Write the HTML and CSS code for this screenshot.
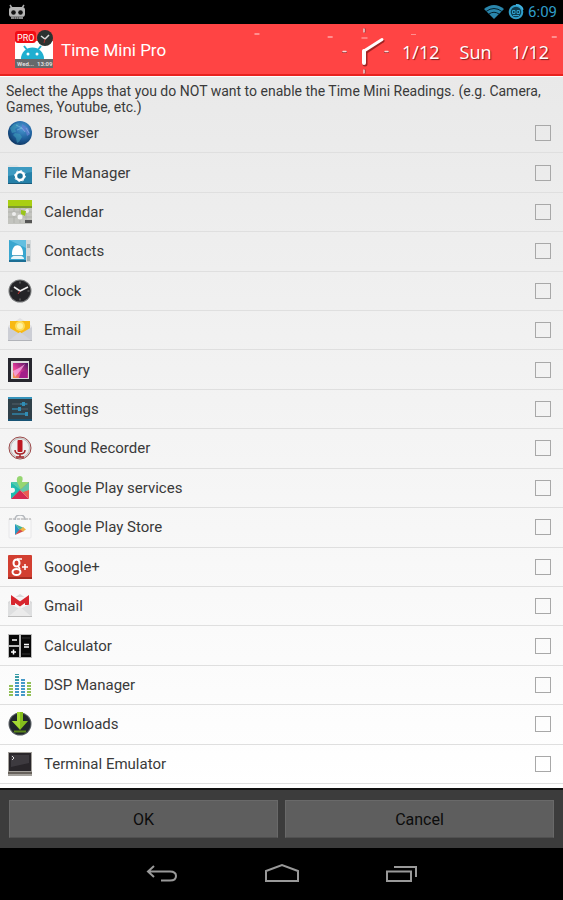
FILE: index.html
```html
<!DOCTYPE html>
<html lang="en">
<head>
  <meta charset="UTF-8">
  <meta name="viewport" content="width=device-width, initial-scale=1.0">
  <title>Time Mini Pro</title>
  <link rel="stylesheet" href="styles.css">
</head>
<body>

  <div class="statusbar">
    <svg class="robot" width="18" height="16" viewBox="0 0 18 16">
      <path d="M2 1l2 3M16 1l-2 3" stroke="#aaa" stroke-width="1.5"/>
      <rect x="1" y="3" width="16" height="10" rx="3" fill="#b5b5b5"/>
      <path d="M3 12h12v3H3z" fill="#888"/>
      <circle cx="5.5" cy="8.5" r="2.3" fill="#111"/>
      <circle cx="12.5" cy="8.5" r="2.3" fill="#111"/>
      <path d="M6 14h6" stroke="#333" stroke-dasharray="1 1"/>
    </svg>
    <div class="status-right">
      <svg width="20" height="16" viewBox="0 0 20 16" fill="#2a86ac">
        <path d="M0 5Q10-3 20 5L10 15z"/>
        <path d="M2 7.500Q10 1.500 18 7.500M5 10Q10 6.500 15 10" fill="none" stroke="#04202c"/>
      </svg>
      <svg width="16" height="16" viewBox="0 0 16 16">
        <circle cx="8" cy="8" r="6.300" fill="#0d3c50" stroke="#2f9dc9" stroke-width="2"/>
        <path d="M8 .7a7.300 7.300 0 0 1 7 5" fill="none" stroke="#46b8e6" stroke-width="1.400"/>
        <path d="M4.500 6.500h2.500v3H4.500zM9 6.500h2.500v3H9z" fill="none" stroke="#2f9dc9"/>
        <path d="M5 11.500h6" stroke="#2f9dc9"/>
      </svg>
      <span>6:09</span>
    </div>
  </div>

  <header class="topbar">
    <svg class="app-logo" width="40" height="40" viewBox="0 0 40 40">
      <rect x="1" y="11" width="38" height="18" fill="#fff"/>
      <path d="M7 29a11 11 0 0 1 23 0z" fill="#20afd0"/>
      <path d="M10 16l4 5M27 16l-4 5" stroke="#20afd0" stroke-width="2"/>
      <circle cx="14" cy="24" r="1.500" fill="#fff"/>
      <circle cx="23" cy="24" r="1.500" fill="#fff"/>
      <rect x="1" y="29" width="38" height="9" fill="#66696b"/>
      <text x="3" y="36" font-size="6" font-weight="700" fill="#ddd">Wed...</text>
      <text x="23" y="36" font-size="6" font-weight="700" fill="#ddd">13:09</text>
      <rect x="1" y="1" width="21" height="12" rx="3" fill="#f20d14"/>
      <text x="3" y="11" font-size="9" fill="#fff">PRO</text>
      <circle cx="31" cy="8" r="8" fill="#2b3230"/>
      <path d="M27 6l4 3 4-4" fill="none" stroke="#ddd" stroke-width="1.500"/>
      <path d="M31 9l-1 4" stroke="#a33"/>
    </svg>
    <h1>Time Mini Pro</h1>
    <svg class="specks" width="100%" height="100%">
      <g fill="#ff8f8f">
        <rect x="45.200%" y="9" width="5" height="2"/>
        <rect x="58.200%" y="12" width="5" height="2"/>
        <rect x="73%" y="10" width="5" height="1"/>
        <rect x="98%" y="12" width="5" height="2"/>
      </g>
    </svg>
    <div class="readings">
      <svg width="52" height="50" viewBox="0 0 52 50" stroke-linecap="round">
        <path d="M26.500 4v3M26.500 45v3M5 27h3M47 27h3" stroke="#903030" stroke-width="2"/>
        <path d="M26 4v3M26 45v3M5 26.500h3M47 26.500h3" stroke="#ffd5d5" stroke-width="1.500"/>
        <path d="M24 13h5" stroke="#ff9090" stroke-width="1.500"/>
        <path d="M27 28L45 16" stroke="#a02424" stroke-width="3"/>
        <path d="M27 27v12" stroke="#a02424" stroke-width="5"/>
        <path d="M26 26L44 14.500" stroke="#fff" stroke-width="3"/>
        <path d="M26 26v12" stroke="#fff" stroke-width="4"/>
      </svg>
      <span>1/12</span>
      <span>Sun</span>
      <span>1/12</span>
    </div>
  </header>

  <main>
    <p class="intro">Select the Apps that you do NOT want to enable the Time Mini Readings. (e.g. Camera, Games, Youtube, etc.)</p>

    <ul class="apps">
      <li>
        <label for="browser">
          <svg viewBox="0 0 24 24">
            <defs>
              <radialGradient id="globe" cx="60%" cy="30%" r="75%">
                <stop offset="0" stop-color="#4b9bd4"/>
                <stop offset=".6" stop-color="#1f5f9c"/>
                <stop offset="1" stop-color="#0e3560"/>
              </radialGradient>
            </defs>
            <circle cx="12" cy="12" r="12" fill="url(#globe)"/>
            <path d="M2 7l4-4 5-1-1 4-3 2 1 3-4 1zM7 12l5 1 2 3-3 5-2 1-1-5-3-3z" fill="#43a7bd" opacity=".5"/>
            <path d="M14 3l6 4 2 6-3 2-1-4-4-2z" fill="#6280cf" opacity=".8"/>
            <path d="M9 9l5-2 3 4M8 4l6 3M18 7l3 5" fill="none" stroke="#a7d6f2" stroke-width=".7" opacity=".6"/>
          </svg>
          Browser
        </label>
        <input type="checkbox" id="browser">
      </li>
      <li>
        <label for="files">
          <svg viewBox="0 0 24 24">
            <path d="M0 4h9l2 2h13v17H0z" fill="#e0e4e5"/>
            <path d="M0 6h24v17H0z" fill="#2580a8"/>
            <path d="M0 6h24v5L0 15z" fill="#3d9ac1"/>
            <path d="M0 22h24v1H0z" fill="#195b7c"/>
            <circle cx="12" cy="15" r="4" fill="#1c7298" stroke="#fff" stroke-width="2.500"/>
            <circle cx="12" cy="15" r="5.500" fill="none" stroke="#fff" stroke-dasharray="1.500 2.800"/>
          </svg>
          File Manager
        </label>
        <input type="checkbox" id="files">
      </li>
      <li>
        <label for="calendar">
          <svg viewBox="0 0 24 24">
            <rect width="24" height="24" fill="#c3c4bf"/>
            <rect width="24" height="6" fill="#a9cf12"/>
            <path d="M0 6h24v2H0z" fill="#7d9b2d"/>
            <path d="M0 12h24M0 17h24M6 8v15M12 8v15M18 8v15" stroke="#b1b2ad"/>
            <circle cx="6" cy="14" r="2" fill="#eee"/>
            <circle cx="12" cy="17" r="2.500" fill="#f4f4f4"/>
            <circle cx="19" cy="11" r="2" fill="#eee"/>
            <path d="M13 10l5 1-1 5-4-2z" fill="#9ac51b"/>
            <path d="M17 20h7v3h-7z" fill="#555"/>
          </svg>
          Calendar
        </label>
        <input type="checkbox" id="calendar">
      </li>
      <li>
        <label for="contacts">
          <svg viewBox="0 0 24 24">
            <rect x="15" y="1" width="8" height="22" fill="#d5d9db"/>
            <path d="M19 5h3v4h-3zM19 17h3v5h-3z" fill="#a5b1b5"/>
            <rect x="1" y="1" width="17" height="22" fill="#39a6cf"/>
            <rect x="1" y="21" width="17" height="2" fill="#1d6e94"/>
            <path d="M1 1h17v8z" fill="#64bfe0"/>
            <path d="M4 16c-1-13 12-13 11 0z" fill="#fff"/>
            <path d="M3 20c0-5 13-5 13 0z" fill="#eaf5f9"/>
            <path d="M5 16.500h9" stroke="#63a9c4"/>
          </svg>
          Contacts
        </label>
        <input type="checkbox" id="contacts">
      </li>
      <li>
        <label for="clock">
          <svg viewBox="0 0 24 24">
            <circle cx="12" cy="12" r="11.500" fill="#77797a"/>
            <circle cx="12" cy="12" r="10.500" fill="#242427"/>
            <path d="M12 2.500v2M12 19.500v2M2.500 12h2M19.500 12h2" stroke="#777"/>
            <path d="M6 8l6 4 8-4" fill="none" stroke="#eee" stroke-width="1.600"/>
            <path d="M12 12l-2 3" stroke="#c33"/>
          </svg>
          Clock
        </label>
        <input type="checkbox" id="clock">
      </li>
      <li>
        <label for="email">
          <svg viewBox="0 0 24 24">
            <path d="M0 8L12 0l12 8v15H0z" fill="#e2e2e5"/>
            <path d="M2 3h20v13H2z" fill="#f8b914"/>
            <circle cx="12" cy="8" r="5" fill="#fddc5a"/>
            <circle cx="12" cy="8" r="3" fill="#fff1a0"/>
            <path d="M0 9l12 7 12-7v14H0z" fill="#ccced5"/>
            <path d="M0 23l12-9 12 9z" fill="#d4d5dc"/>
            <path d="M0 22h24v1H0z" fill="#b2b4ba"/>
          </svg>
          Email
        </label>
        <input type="checkbox" id="email">
      </li>
      <li>
        <label for="gallery">
          <svg viewBox="0 0 24 24">
            <defs>
              <linearGradient id="photo" x1="0" y1="1" x2="1" y2="0">
                <stop offset="0" stop-color="#f8a33a"/>
                <stop offset=".4" stop-color="#e33c9b"/>
                <stop offset="1" stop-color="#4b1560"/>
              </linearGradient>
            </defs>
            <rect width="24" height="24" fill="#27272e"/>
            <rect x="3" y="3" width="18" height="18" fill="#ddd"/>
            <rect x="5" y="5" width="15" height="15" fill="url(#photo)"/>
            <path d="M5 13l6-3 6-4-4 6-6 7z" fill="#f7a9e4" opacity=".8"/>
            <path d="M11 20l2-6 6-2v8z" fill="#a3208a"/>
          </svg>
          Gallery
        </label>
        <input type="checkbox" id="gallery">
      </li>
      <li>
        <label for="settings">
          <svg viewBox="0 0 24 24">
            <rect width="24" height="24" fill="#304049"/>
            <path d="M0 1h24" stroke="#3693bb" stroke-width="2"/>
            <path d="M0 23h24" stroke="#185374" stroke-width="2"/>
            <path d="M4 7h16M4 12h16M4 17h16" stroke="#52616a"/>
            <path d="M12 7h7M4 12h7M4 17h13" stroke="#2b7ea3" stroke-width="1.500"/>
            <path d="M14 5h3v4h-3zM10 10h3v4h-3zM17 15h3v4h-3z" fill="#318db4"/>
          </svg>
          Settings
        </label>
        <input type="checkbox" id="settings">
      </li>
      <li>
        <label for="recorder">
          <svg viewBox="0 0 24 24">
            <circle cx="12" cy="12" r="11" fill="#dedede" stroke="#9c4a4a"/>
            <circle cx="12" cy="12" r="9.500" fill="#eee" stroke="#bdbdbd"/>
            <rect x="9.500" y="4" width="5" height="12" rx="1" fill="#bd1720"/>
            <path d="M7 14q0 4 5 4t5-4M12 18v3M8 21h8" fill="none" stroke="#a52329" stroke-width="1.500"/>
          </svg>
          Sound Recorder
        </label>
        <input type="checkbox" id="recorder">
      </li>
      <li>
        <label for="play-services">
          <svg viewBox="0 0 24 24">
            <path d="M3 6h6q-1-6 3-6t2 6h7v7L12 14z" fill="#96d672"/>
            <path d="M3 6l10 8-10 9v-6q4 0 4-3t-4-2z" fill="#20bcb0"/>
            <path d="M3 6h6l4 8z" fill="#4ccbad"/>
            <path d="M3 23l9-9 9 9z" fill="#d52a50"/>
            <path d="M21 6v17l-9-9z" fill="#e95d50"/>
            <path d="M21 6v8l-6 2-3-2z" fill="#62c8a8"/>
          </svg>
          Google Play services
        </label>
        <input type="checkbox" id="play-services">
      </li>
      <li>
        <label for="play-store">
          <svg viewBox="0 0 24 24">
            <path d="M1 4h22v18q0 1-1 1H2q-1 0-1-1z" fill="#f9f9fa" stroke="#e6e6e8"/>
            <path d="M1 4h22" stroke="#aaa" stroke-dasharray="3 1"/>
            <path d="M7 5q0-5 5-5t5 5" fill="none" stroke="#b4b8bd" stroke-width="1.500"/>
            <path d="M7 9v11l5-5z" fill="#2798c5"/>
            <path d="M7 9l9 4-4 2z" fill="#45b79b"/>
            <path d="M7 20l9-4-4-2z" fill="#d64b4c"/>
            <path d="M15 12l3 2.500-3 2-3-2z" fill="#edb445"/>
          </svg>
          Google Play Store
        </label>
        <input type="checkbox" id="play-store">
      </li>
      <li>
        <label for="google-plus">
          <svg viewBox="0 0 24 24">
            <rect width="24" height="24" rx="1" fill="#d23f31"/>
            <path d="M0 22h24v2H0z" fill="#a62c22"/>
            <g fill="none" stroke="#fff" stroke-width="2">
              <ellipse cx="8.500" cy="8" rx="3" ry="3.500"/>
              <ellipse cx="8.500" cy="17" rx="4" ry="3"/>
              <path d="M9 4h5M10 11l2 3" stroke-width="1.500"/>
              <path d="M14 12h6M17 9v6" stroke-width="1.500"/>
            </g>
          </svg>
          Google+
        </label>
        <input type="checkbox" id="google-plus">
      </li>
      <li>
        <label for="gmail">
          <svg viewBox="0 0 24 24">
            <path d="M0 8L12 0l12 8v15H0z" fill="#d9d9da"/>
            <path d="M2 3h20v13H2z" fill="#f5f5f5"/>
            <path d="M5 11V5l7 5 7-5v6" fill="none" stroke="#d7262e" stroke-width="4"/>
            <path d="M0 9l12 6 12-6v14H0z" fill="#dedfe0"/>
            <path d="M0 23l12-10 12 10z" fill="#ebebeb"/>
            <path d="M0 22h24v1H0z" fill="#bbb"/>
          </svg>
          Gmail
        </label>
        <input type="checkbox" id="gmail">
      </li>
      <li>
        <label for="calculator">
          <svg viewBox="0 0 24 24">
            <rect width="24" height="24" fill="#bcbcbc"/>
            <path d="M1 1h10v10H1zM1 13h10v10H1zM13 1h10v22H13z" fill="#080808"/>
            <path d="M4 6h5M3 18h5M5.500 15.500v5M16 10.500h5M16 13h5" stroke="#fff" stroke-width="1.500"/>
            <path d="M14 4h8M14 20h8" stroke="#333"/>
          </svg>
          Calculator
        </label>
        <input type="checkbox" id="calculator">
      </li>
      <li>
        <label for="dsp">
          <svg viewBox="0 0 24 24" fill="none" stroke-width="4" stroke-dasharray="2 1">
            <path d="M3 23V12M21 23V8" stroke="#91bf55"/>
            <path d="M9 23V1M15 23V5" stroke="#4599c7"/>
            <path d="M9 8V1" stroke="#3a9da6"/>
          </svg>
          DSP Manager
        </label>
        <input type="checkbox" id="dsp">
      </li>
      <li>
        <label for="downloads">
          <svg viewBox="0 0 24 24">
            <circle cx="12" cy="12" r="11.500" fill="#555b60"/>
            <circle cx="12" cy="12" r="10.500" fill="#20262b"/>
            <path d="M9 0h6v9h5l-8 9-8-9h5z" fill="#84bd1c"/>
            <path d="M9 0h3v17l-8-8h5z" fill="#a4d934"/>
            <path d="M6 19.500h12" stroke="#5a8718" stroke-width="2"/>
          </svg>
          Downloads
        </label>
        <input type="checkbox" id="downloads">
      </li>
      <li>
        <label for="terminal">
          <svg viewBox="0 0 24 24">
            <rect width="24" height="24" fill="#a3a09b"/>
            <rect x="1" y="1" width="22" height="18" fill="#29262a"/>
            <path d="M3 3h18v8L3 15z" fill="#3d3a3f"/>
            <path d="M4 4l2 2-2 2" fill="none" stroke="#ddd"/>
            <path d="M0 20h24v2H0z" fill="#67625c"/>
          </svg>
          Terminal Emulator
        </label>
        <input type="checkbox" id="terminal">
      </li>
    </ul>
  </main>

  <div class="actions">
    <button type="button">OK</button>
    <button type="button">Cancel</button>
  </div>

  <nav class="navbar">
    <button type="button" aria-label="Back">
      <svg width="36" height="24" viewBox="0 0 36 24">
        <path d="M10 4L4 9.500l6 5.500M4 9.500h22q6 0 6 4.500t-6 4.500H17"/>
      </svg>
    </button>
    <button type="button" aria-label="Home">
      <svg width="36" height="24" viewBox="0 0 36 24">
        <path d="M2 19V9l16-6 16 6v10z"/>
      </svg>
    </button>
    <button type="button" aria-label="Recent apps">
      <svg width="36" height="24" viewBox="0 0 36 24">
        <path d="M3 9.500h24V19H3zM10 5h22v10"/>
      </svg>
    </button>
  </nav>

</body>
</html>
```
FILE: styles.css
```css
:root {
  --red: #ff4444;
  --holo: #2f9dc9;
  --text: #3a3a3a;
}

* {
  box-sizing: border-box;
}

body {
  margin: 0;
  min-height: 100vh;
  display: flex;
  flex-direction: column;
  background: #000;
  color: var(--text);
  font-family: Roboto, sans-serif;
}

svg {
  display: block;
  flex: none;
}

.statusbar {
  height: 24px;
  padding: 0 6px 0 8px;
  display: flex;
  justify-content: space-between;
  align-items: center;
  background: #000;
}

.status-right {
  display: flex;
  align-items: center;
  gap: 4px;
  color: var(--holo);
  font-size: 15px;
}

.topbar {
  position: relative;
  height: 52px;
  padding: 2px 14px 0;
  display: flex;
  align-items: center;
  background: var(--red);
  border-bottom: 2px solid #e8231f;
  color: #fff;
}

.topbar h1 {
  margin: 0 auto 0 7px;
  font-size: 17px;
  font-weight: 400;
}

.specks {
  position: absolute;
  top: 0;
  left: 0;
}

.readings {
  display: flex;
  align-items: center;
  gap: 20px;
  font-family: "Open Sans", sans-serif;
  font-size: 18px;
  line-height: 24px;
  text-shadow: 1px 1px 1px #802020;
}

.readings svg {
  margin-right: -8px;
}

.readings span {
  padding-top: 4px;
}

main {
  flex: 1;
  display: flex;
  flex-direction: column;
  padding-bottom: 4px;
  background: linear-gradient(#e9e9e9, #fff);
  border-top: 1px solid #fff;
}

.intro {
  margin: 0 0 -1px;
  padding: 6px 6px 0;
  font-size: 14px;
  line-height: 16px;
}

.apps {
  flex: 1;
  display: grid;
  grid-auto-rows: 1fr;
  margin: 0;
  padding: 0;
  list-style: none;
}

.apps li {
  min-height: 38px;
  padding: 0 12px 0 8px;
  display: flex;
  align-items: center;
  border-bottom: 1px solid #dfdfdf;
}

.apps label {
  flex: 1;
  display: flex;
  align-items: center;
  gap: 12px;
  font-size: 15px;
}

.apps svg {
  width: 24px;
  height: 24px;
}

.apps input {
  appearance: none;
  width: 16px;
  height: 16px;
  margin: 0;
  border: 1px solid #a8a8a8;
}

.apps input:checked {
  background: var(--holo);
}

.actions {
  display: flex;
  gap: 7px;
  padding: 10px 9px;
  background: #3c3c3c;
  border-top: 2px solid #111;
}

.actions button {
  flex: 1;
  height: 38px;
  border: 1px solid #696969;
  border-bottom-color: #505050;
  background: #5e5e5e;
  color: #0c0c0c;
  font: 16px Roboto, sans-serif;
}

.navbar {
  height: 52px;
  display: flex;
  justify-content: center;
  align-items: center;
  gap: 84px;
  background: #000;
}

.navbar button {
  padding: 0;
  border: none;
  background: none;
}

.navbar path {
  fill: none;
  stroke: #999;
  stroke-width: 2;
}
```
